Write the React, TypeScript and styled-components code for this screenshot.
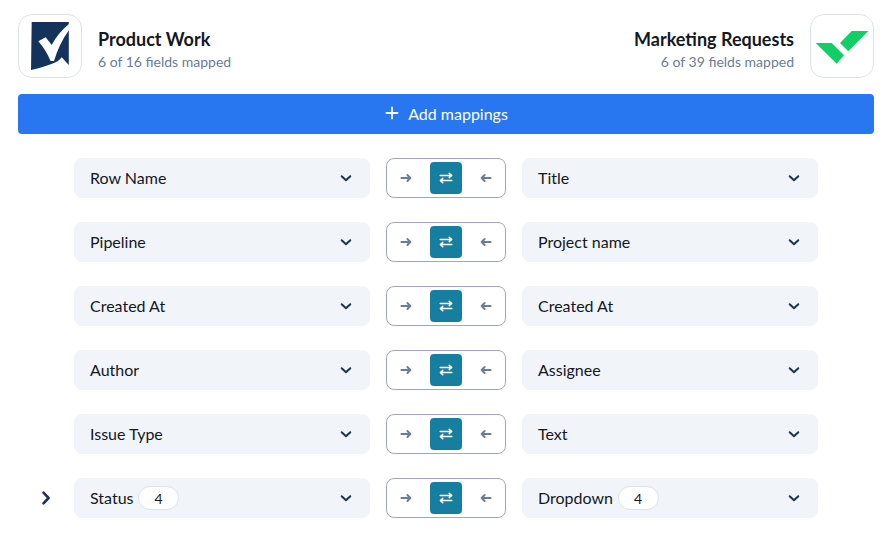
import React from "react";
import styled, { createGlobalStyle } from "styled-components";

const Global = createGlobalStyle`
  html, body { margin: 0; padding: 0; background: #ffffff; }
  body { font-family: Lato, "Open Sans", sans-serif; color: #14181f; }
  * { box-sizing: border-box; }
`;

const Page = styled.div`
  width: 890px;
  height: 534px;
  padding: 14px 16px 0 18px;
  overflow: hidden;
`;

const Header = styled.header`
  display: flex;
  justify-content: space-between;
  align-items: center;
  height: 64px;
`;

const AppInfo = styled.div<{ $right?: boolean }>`
  display: flex;
  align-items: center;
  gap: 16px;
  flex-direction: ${(p) => (p.$right ? "row-reverse" : "row")};
  text-align: ${(p) => (p.$right ? "right" : "left")};
`;

const LogoBox = styled.div`
  width: 64px;
  height: 64px;
  border: 1px solid #dde2ec;
  border-radius: 14px;
  background: #fff;
  display: flex;
`;

const LogoSvg = styled.svg`
  width: 64px;
  height: 64px;
  margin: -1px;
  flex: none;
`;

const AppText = styled.div`
  padding-top: 7px;
`;

const AppTitle = styled.div`
  font-size: 18px;
  line-height: 24px;
  font-weight: 700;
  color: #14181f;
`;

const AppSub = styled.div`
  font-size: 14px;
  line-height: 21px;
  color: #6b7c93;
`;

const AddButton = styled.button`
  width: 856px;
  height: 40px;
  margin-top: 16px;
  border: 0;
  border-radius: 4px;
  background: #2877f0;
  color: #fff;
  font: 400 16px Lato, sans-serif;
  display: flex;
  align-items: center;
  justify-content: center;
  gap: 8px;
  padding: 0 0 2px;
`;

const Rows = styled.div`
  margin-top: 24px;
  display: flex;
  flex-direction: column;
  gap: 24px;
`;

const Row = styled.div`
  display: grid;
  grid-template-columns: 40px 296px 120px 296px;
  column-gap: 16px;
  align-items: center;
  height: 40px;
`;

const Expander = styled.div`
  display: flex;
  justify-content: flex-end;
  padding-right: 4px;
  align-items: center;
`;

const Select = styled.div`
  height: 40px;
  background: #f1f5f9;
  border-radius: 8px;
  padding: 0 17px 0 16px;
  display: flex;
  align-items: center;
  justify-content: space-between;
  font-size: 16px;
  color: #14181f;
`;

const Label = styled.span`
  display: flex;
  align-items: center;
  gap: 4.6px;
  padding-bottom: 2px;
`;

const Badge = styled.span`
  width: 41px;
  height: 24px;
  border: 1px solid #dde2ec;
  border-radius: 12px;
  background: #fff;
  font-size: 14px;
  display: flex;
  align-items: center;
  justify-content: center;
  margin-top: 2px;
`;

const Direction = styled.div`
  width: 120px;
  height: 40px;
  border: 1px solid #9aa9bb;
  border-radius: 8px;
  padding: 3px;
  display: flex;
  gap: 8px;
  background: #fff;
`;

const DirCell = styled.div<{ $active?: boolean }>`
  width: 32px;
  height: 32px;
  border-radius: 4px;
  display: flex;
  align-items: center;
  justify-content: center;
  background: ${(p) => (p.$active ? "#187ea0" : "transparent")};
  color: ${(p) => (p.$active ? "#ffffff" : "#6b7c93")};
`;

const Chevron = () => (
  <svg width="14" height="14" viewBox="0 0 14 14" fill="none" stroke="#1f3158" strokeWidth="2" strokeLinecap="round" strokeLinejoin="round">
    <path d="M2.7 5.2 7 9.2l4.3-4" />
  </svg>
);

const ChevronRight = () => (
  <svg width="16" height="16" viewBox="0 0 16 16" fill="none" stroke="#1f3158" strokeWidth="2.6" strokeLinecap="round" strokeLinejoin="round">
    <path d="M5.5 2.7 10.6 8l-5.1 5.3" />
  </svg>
);

const ArrowRight = () => (
  <svg width="12" height="12" viewBox="0 0 12 12" fill="none" stroke="currentColor" strokeWidth="1.9" strokeLinecap="round" strokeLinejoin="round">
    <path d="M1.4 6h9M7.4 3 10.4 6 7.4 9" />
  </svg>
);

const ArrowLeft = () => (
  <svg width="12" height="12" viewBox="0 0 12 12" fill="none" stroke="currentColor" strokeWidth="1.9" strokeLinecap="round" strokeLinejoin="round">
    <path d="M10.6 6H1.6M4.6 3 1.6 6 4.6 9" />
  </svg>
);

const Swap = () => (
  <svg width="14" height="14" viewBox="0 0 14 14" fill="none" stroke="currentColor" strokeWidth="1.5" strokeLinecap="round" strokeLinejoin="round">
    <path d="M1.2 4.4h11.4M10.2 2.2l2.4 2.2-2.4 2.2" />
    <path d="M12.8 9.6H1.4M3.8 7.4 1.4 9.6l2.4 2.2" />
  </svg>
);

const Plus = () => (
  <svg width="16" height="16" viewBox="0 0 16 16" fill="none" stroke="#fff" strokeWidth="1.8" strokeLinecap="round">
    <path d="M8 2.5v11M2.5 8h11" />
  </svg>
);

const SmartsheetLogo = () => (
  <LogoSvg viewBox="0 0 64 64">
    <path d="M13.7 8H50.8V51L43.7 43.3C41 46.5 38.5 48.3 34 49.7 28 51.7 20 54.8 13 56Z" fill="#14335c" />
    <path d="M20.3 27.3 27.7 23.3 33.7 31C38 23 44 15.5 51 10V16C44.5 25 39.5 35.5 36 47H32.5C29.5 39.5 25.5 33 20.3 27.3Z" fill="#fff" />
  </LogoSvg>
);

const WrikeLogo = () => (
  <LogoSvg viewBox="0 0 64 64">
    <path d="M5.7 29H21.7L34 41.3 26.7 49.7Z" fill="#0fcf66" />
    <path d="M30 29 41.7 17H58.3L38.3 37.3Z" fill="#0fcf66" />
  </LogoSvg>
);

type Mapping = { left: string; right: string; leftCount?: number; rightCount?: number; expandable?: boolean };

const mappings: Mapping[] = [
  { left: "Row Name", right: "Title" },
  { left: "Pipeline", right: "Project name" },
  { left: "Created At", right: "Created At" },
  { left: "Author", right: "Assignee" },
  { left: "Issue Type", right: "Text" },
  { left: "Status", right: "Dropdown", leftCount: 4, rightCount: 4, expandable: true },
];

export default function App() {
  return (
    <Page>
      <Global />
      <Header>
        <AppInfo>
          <LogoBox><SmartsheetLogo /></LogoBox>
          <AppText>
            <AppTitle>Product Work</AppTitle>
            <AppSub>6 of 16 fields mapped</AppSub>
          </AppText>
        </AppInfo>
        <AppInfo $right>
          <LogoBox><WrikeLogo /></LogoBox>
          <AppText>
            <AppTitle>Marketing Requests</AppTitle>
            <AppSub>6 of 39 fields mapped</AppSub>
          </AppText>
        </AppInfo>
      </Header>
      <AddButton>
        <Plus />
        Add mappings
      </AddButton>
      <Rows>
        {mappings.map((m, i) => (
          <Row key={i}>
            <Expander>{m.expandable && <ChevronRight />}</Expander>
            <Select>
              <Label>
                {m.left}
                {m.leftCount !== undefined && <Badge>{m.leftCount}</Badge>}
              </Label>
              <Chevron />
            </Select>
            <Direction>
              <DirCell><ArrowRight /></DirCell>
              <DirCell $active><Swap /></DirCell>
              <DirCell><ArrowLeft /></DirCell>
            </Direction>
            <Select>
              <Label>
                {m.right}
                {m.rightCount !== undefined && <Badge>{m.rightCount}</Badge>}
              </Label>
              <Chevron />
            </Select>
          </Row>
        ))}
      </Rows>
    </Page>
  );
}
